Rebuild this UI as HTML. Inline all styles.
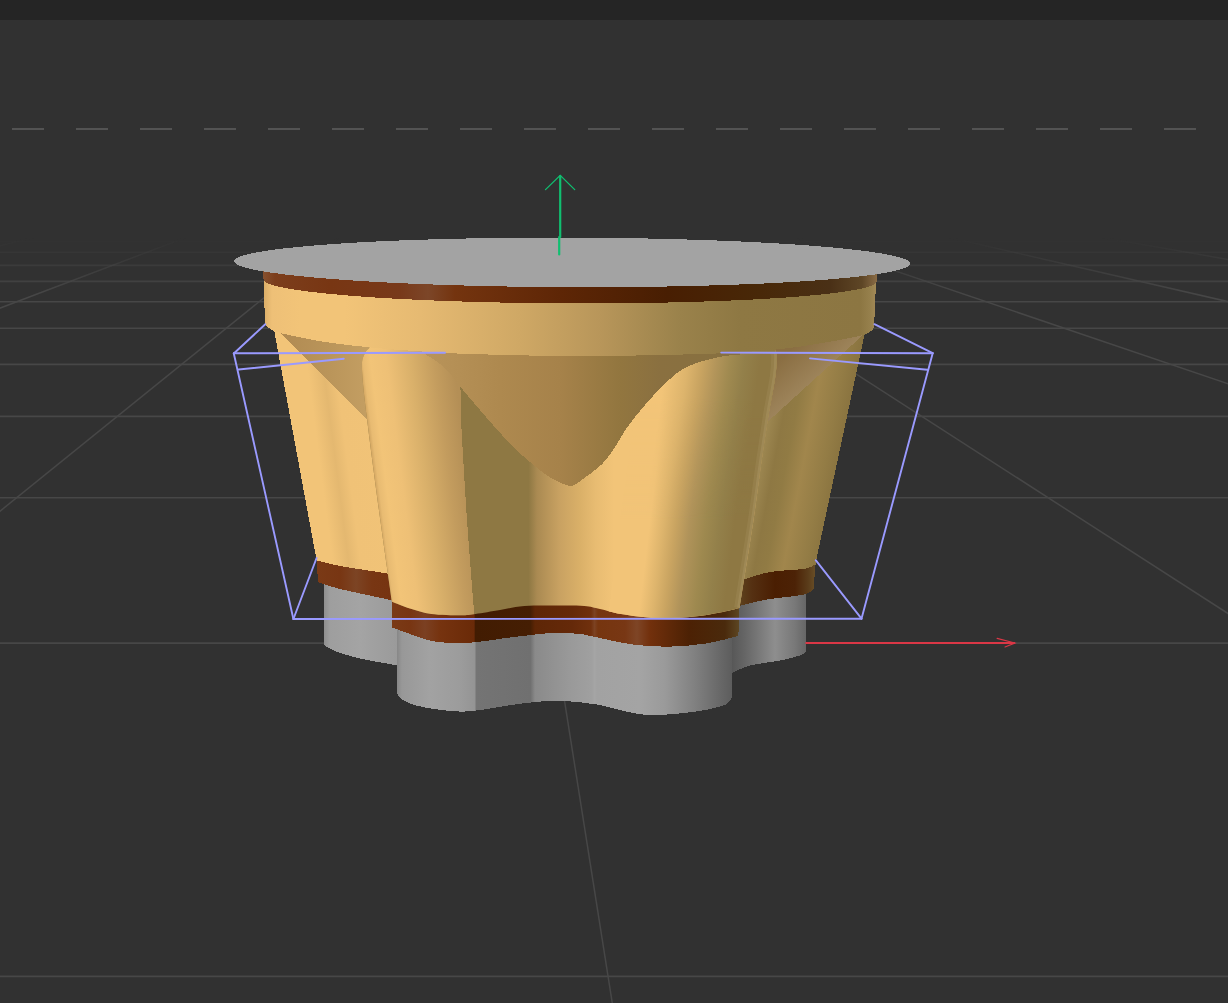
<!DOCTYPE html>
<html><head><meta charset="utf-8"><title>Viewport</title>
<style>
html,body{margin:0;padding:0;background:#313131;overflow:hidden;font-family:"Liberation Sans",sans-serif;}
svg{display:block;}
</style></head><body>
<svg width="1228" height="1003" viewBox="0 0 1228 1003">
<defs><linearGradient id="fadeg" gradientUnits="userSpaceOnUse" x1="0" y1="238" x2="0" y2="295"><stop offset="0" stop-color="#000"/><stop offset="1" stop-color="#fff"/></linearGradient>
<mask id="fadem" maskUnits="userSpaceOnUse" x="0" y="0" width="1228" height="1003"><rect x="0" y="0" width="1228" height="1003" fill="url(#fadeg)"/></mask>
<linearGradient id="gBL" gradientUnits="userSpaceOnUse" x1="323" y1="0" x2="398" y2="0"><stop offset="0.0000" stop-color="#8c8c8c"/><stop offset="0.0933" stop-color="#9e9e9e"/><stop offset="0.4933" stop-color="#a4a4a4"/><stop offset="1.0000" stop-color="#9a9a9a"/></linearGradient>
<linearGradient id="gBR" gradientUnits="userSpaceOnUse" x1="730" y1="0" x2="806" y2="0"><stop offset="0.0000" stop-color="#555"/><stop offset="0.1974" stop-color="#666"/><stop offset="0.5921" stop-color="#8e8e8e"/><stop offset="0.8553" stop-color="#787878"/><stop offset="1.0000" stop-color="#666"/></linearGradient>
<linearGradient id="bBL" gradientUnits="userSpaceOnUse" x1="316" y1="0" x2="392" y2="0"><stop offset="0.0000" stop-color="#7a3a16"/><stop offset="0.3158" stop-color="#783613"/><stop offset="0.5263" stop-color="#7c4424"/><stop offset="0.7368" stop-color="#783613"/><stop offset="1.0000" stop-color="#763411"/></linearGradient>
<linearGradient id="bBR" gradientUnits="userSpaceOnUse" x1="738" y1="0" x2="816" y2="0"><stop offset="0.0000" stop-color="#5e441f"/><stop offset="0.1795" stop-color="#553012"/><stop offset="0.4744" stop-color="#4a1e02"/><stop offset="0.7308" stop-color="#4c2206"/><stop offset="0.8974" stop-color="#5a3c1a"/><stop offset="1.0000" stop-color="#6a5028"/></linearGradient>
<linearGradient id="yBL" gradientTransform="translate(-62.4 0) skewX(7.40691)" gradientUnits="userSpaceOnUse" x1="240" y1="0" x2="420" y2="0"><stop offset="0.0000" stop-color="#dcae68"/><stop offset="0.1222" stop-color="#dcae68"/><stop offset="0.1667" stop-color="#F2C478"/><stop offset="0.4556" stop-color="#F2C478"/><stop offset="0.5444" stop-color="#e4b870"/><stop offset="0.6111" stop-color="#f0c277"/><stop offset="1.0000" stop-color="#F2C478"/></linearGradient>
<linearGradient id="rBL" gradientUnits="userSpaceOnUse" x1="280" y1="0" x2="370" y2="0"><stop offset="0.0000" stop-color="#b08a52"/><stop offset="0.5556" stop-color="#ba955a"/><stop offset="1.0000" stop-color="#c49f63"/></linearGradient>
<linearGradient id="yBR" gradientTransform="translate(91.2 0) skewX(-10.758)" gradientUnits="userSpaceOnUse" x1="730" y1="0" x2="900" y2="0"><stop offset="0.0000" stop-color="#9c8650"/><stop offset="0.1647" stop-color="#9c8650"/><stop offset="0.2412" stop-color="#8e7843"/><stop offset="0.3118" stop-color="#917b44"/><stop offset="0.4118" stop-color="#a1864c"/><stop offset="0.5412" stop-color="#937c45"/><stop offset="0.6176" stop-color="#8a7440"/><stop offset="1.0000" stop-color="#86703e"/></linearGradient>
<linearGradient id="rBR" gradientUnits="userSpaceOnUse" x1="790" y1="350" x2="830" y2="395"><stop offset="0" stop-color="#8a6e42"/><stop offset="1" stop-color="#a89068"/></linearGradient>
<linearGradient id="gF" gradientUnits="userSpaceOnUse" x1="396" y1="0" x2="733" y2="0"><stop offset="0.0000" stop-color="#848484"/><stop offset="0.0178" stop-color="#989898"/><stop offset="0.1009" stop-color="#a2a2a2"/><stop offset="0.1899" stop-color="#9c9c9c"/><stop offset="0.2344" stop-color="#949494"/><stop offset="0.2374" stop-color="#747474"/><stop offset="0.3991" stop-color="#707070"/><stop offset="0.4125" stop-color="#8a8a8a"/><stop offset="0.5223" stop-color="#9a9a9a"/><stop offset="0.5816" stop-color="#a0a0a0"/><stop offset="0.5890" stop-color="#a5a5a5"/><stop offset="0.5964" stop-color="#a2a2a2"/><stop offset="0.7240" stop-color="#a4a4a4"/><stop offset="0.7982" stop-color="#9a9a9a"/><stop offset="0.8872" stop-color="#808080"/><stop offset="0.9674" stop-color="#666"/><stop offset="1.0000" stop-color="#5c5c5c"/></linearGradient>
<linearGradient id="bF" gradientUnits="userSpaceOnUse" x1="391" y1="0" x2="740" y2="0"><stop offset="0.0000" stop-color="#7a3a16"/><stop offset="0.0544" stop-color="#783512"/><stop offset="0.0974" stop-color="#7b4022"/><stop offset="0.1404" stop-color="#76330f"/><stop offset="0.2378" stop-color="#6a2a08"/><stop offset="0.2421" stop-color="#421c02"/><stop offset="0.3997" stop-color="#451e03"/><stop offset="0.4126" stop-color="#5e2606"/><stop offset="0.5186" stop-color="#652909"/><stop offset="0.5731" stop-color="#70300d"/><stop offset="0.5831" stop-color="#7c4222"/><stop offset="0.5931" stop-color="#76350f"/><stop offset="0.6705" stop-color="#783714"/><stop offset="0.7049" stop-color="#7e4526"/><stop offset="0.7421" stop-color="#72300c"/><stop offset="0.8539" stop-color="#4c2104"/><stop offset="0.9570" stop-color="#4a2a0c"/><stop offset="1.0000" stop-color="#5e4824"/></linearGradient>
<clipPath id="cF"><path d="M369.3 348.1 C368.5 349.1 365.6 350.7 364.4 354.2 C363.2 357.7 361.6 358.3 362.0 368.9 C362.4 379.5 363.8 392.5 366.9 417.7 C369.9 442.9 376.1 489.3 380.3 520.0 C384.5 550.7 390.0 588.2 391.9 601.8 L391.9 601.8 C394.9 602.9 403.4 606.5 410.0 608.5 C416.6 610.5 423.0 612.9 431.5 614.0 C440.0 615.1 453.5 615.3 460.8 615.3 C468.1 615.3 469.0 614.9 475.5 614.0 C482.0 613.1 491.9 611.3 500.0 610.0 C508.1 608.7 514.3 606.8 524.3 606.0 C534.3 605.2 550.0 605.5 560.0 605.5 C570.0 605.5 577.7 605.4 584.4 606.0 C591.1 606.6 593.9 607.7 600.0 609.0 C606.1 610.3 611.4 612.5 621.0 614.0 C630.6 615.5 645.5 617.8 657.7 618.2 C669.9 618.6 684.0 617.5 694.4 616.5 C704.8 615.5 712.5 613.9 720.0 612.5 C727.5 611.1 736.3 608.8 739.6 608.0 L739.6 608.0 C741.9 593.3 750.0 543.6 753.5 520.0 C757.0 496.4 758.4 483.7 760.8 466.6 C763.2 449.6 765.7 432.8 768.1 417.7 C770.5 402.6 774.0 386.4 775.4 376.2 C776.8 366.0 776.7 360.6 776.7 356.6 C776.7 352.6 775.6 352.8 775.4 352.0 L775 340 L369 340 Z"/></clipPath>
<linearGradient id="yF" gradientUnits="userSpaceOnUse" x1="468" y1="0" x2="800" y2="0"><stop offset="0.0000" stop-color="#8e7843"/><stop offset="0.1822" stop-color="#8e7843"/><stop offset="0.2078" stop-color="#aa8a52"/><stop offset="0.2771" stop-color="#c9a262"/><stop offset="0.3373" stop-color="#dab068"/><stop offset="0.3855" stop-color="#e8bc72"/><stop offset="0.4398" stop-color="#F2C478"/><stop offset="1.0000" stop-color="#F2C478"/></linearGradient>
<linearGradient id="yFR" gradientTransform="translate(62.4 0) skewX(-6.84277)" gradientUnits="userSpaceOnUse" x1="560" y1="0" x2="820" y2="0"><stop offset="0.0000" stop-color="#F2C478" stop-opacity="0"/><stop offset="0.2304" stop-color="#F2C478" stop-opacity="0"/><stop offset="0.2308" stop-color="#F2C478" stop-opacity="1"/><stop offset="0.3462" stop-color="#F2C478"/><stop offset="0.4000" stop-color="#ddb46c"/><stop offset="0.4462" stop-color="#c9a461"/><stop offset="0.5000" stop-color="#b0935a"/><stop offset="0.5615" stop-color="#9e894f"/><stop offset="0.6154" stop-color="#93804a"/><stop offset="0.6731" stop-color="#8E7843"/><stop offset="1.0000" stop-color="#8E7843"/></linearGradient>
<linearGradient id="yFR2" gradientTransform="translate(72.8 0) skewX(-7.96961)" gradientUnits="userSpaceOnUse" x1="560" y1="0" x2="820" y2="0"><stop offset="0.0000" stop-color="#F2C478" stop-opacity="0"/><stop offset="0.2304" stop-color="#F2C478" stop-opacity="0"/><stop offset="0.2308" stop-color="#F2C478" stop-opacity="1"/><stop offset="0.3231" stop-color="#F2C478"/><stop offset="0.4077" stop-color="#ddb46c"/><stop offset="0.4615" stop-color="#c9a461"/><stop offset="0.5154" stop-color="#b3955a"/><stop offset="0.5692" stop-color="#a08a50"/><stop offset="0.6231" stop-color="#93804a"/><stop offset="0.6846" stop-color="#8E7843"/><stop offset="1.0000" stop-color="#8E7843"/></linearGradient>
<linearGradient id="fr2g" gradientUnits="userSpaceOnUse" x1="0" y1="395" x2="0" y2="520"><stop offset="0" stop-color="#fff"/><stop offset="1" stop-color="#000"/></linearGradient>
<mask id="fr2m" maskUnits="userSpaceOnUse" x="560" y="335" width="240" height="200"><rect x="560" y="335" width="240" height="200" fill="url(#fr2g)"/></mask>
<linearGradient id="yFL" gradientUnits="userSpaceOnUse" x1="372" y1="470" x2="466" y2="458"><stop offset="0" stop-color="#c89c5a"/><stop offset="0.05" stop-color="#e8bb72"/><stop offset="0.13" stop-color="#F2C478"/><stop offset="0.3" stop-color="#EEC076"/><stop offset="0.55" stop-color="#D9B06A"/><stop offset="0.8" stop-color="#C39C5E"/><stop offset="1" stop-color="#B48F56"/></linearGradient>
<linearGradient id="rC" gradientUnits="userSpaceOnUse" x1="425" y1="0" x2="725" y2="0"><stop offset="0.0000" stop-color="#b9945a"/><stop offset="0.2500" stop-color="#ae894f"/><stop offset="0.4500" stop-color="#a6824a"/><stop offset="0.6500" stop-color="#92763f"/><stop offset="0.7833" stop-color="#8a7040"/><stop offset="1.0000" stop-color="#877040"/></linearGradient>
<linearGradient id="yB" gradientUnits="userSpaceOnUse" x1="263" y1="0" x2="877" y2="0"><stop offset="0.0000" stop-color="#d9ac66"/><stop offset="0.0147" stop-color="#eec077"/><stop offset="0.0603" stop-color="#F2C478"/><stop offset="0.1336" stop-color="#F2C478"/><stop offset="0.2557" stop-color="#e6ba72"/><stop offset="0.4186" stop-color="#cfa865"/><stop offset="0.5489" stop-color="#b8965a"/><stop offset="0.6792" stop-color="#9a824b"/><stop offset="0.7769" stop-color="#8e7843"/><stop offset="0.9723" stop-color="#8c7642"/><stop offset="0.9886" stop-color="#96804c"/><stop offset="1.0000" stop-color="#a48a58"/></linearGradient>
<linearGradient id="bT" gradientUnits="userSpaceOnUse" x1="263" y1="0" x2="877" y2="0"><stop offset="0.0000" stop-color="#86502e"/><stop offset="0.0195" stop-color="#7c3e1c"/><stop offset="0.1091" stop-color="#783613"/><stop offset="0.2231" stop-color="#78391a"/><stop offset="0.2687" stop-color="#7c4628"/><stop offset="0.3127" stop-color="#74340f"/><stop offset="0.4837" stop-color="#5e2606"/><stop offset="0.6580" stop-color="#481e02"/><stop offset="0.8094" stop-color="#482808"/><stop offset="0.9235" stop-color="#4a3016"/><stop offset="0.9756" stop-color="#5e4626"/><stop offset="1.0000" stop-color="#8a6c46"/></linearGradient></defs>
<rect x="0" y="0" width="1228" height="1003" fill="#313131"/>
<rect x="0" y="0" width="1228" height="20" fill="#252525"/>
<line x1="12" y1="128.9" x2="1228" y2="128.9" stroke="#535353" stroke-width="2" stroke-dasharray="32 32"/>
<g><line x1="0" y1="976.4" x2="1228" y2="976.4" stroke="#474747" stroke-width="1.6" opacity="1.00"/><line x1="0" y1="643.1" x2="1228" y2="643.1" stroke="#474747" stroke-width="1.6" opacity="1.00"/><line x1="0" y1="497.8" x2="1228" y2="497.8" stroke="#474747" stroke-width="1.6" opacity="1.00"/><line x1="0" y1="416.4" x2="1228" y2="416.4" stroke="#474747" stroke-width="1.6" opacity="1.00"/><line x1="0" y1="364.4" x2="1228" y2="364.4" stroke="#474747" stroke-width="1.6" opacity="1.00"/><line x1="0" y1="328.3" x2="1228" y2="328.3" stroke="#474747" stroke-width="1.6" opacity="1.00"/><line x1="0" y1="301.8" x2="1228" y2="301.8" stroke="#474747" stroke-width="1.6" opacity="1.00"/><line x1="0" y1="281.4" x2="1228" y2="281.4" stroke="#474747" stroke-width="1.6" opacity="0.76"/><line x1="0" y1="265.4" x2="1228" y2="265.4" stroke="#474747" stroke-width="1.6" opacity="0.48"/><line x1="0" y1="252.3" x2="1228" y2="252.3" stroke="#474747" stroke-width="1.6" opacity="0.25"/><line x1="0" y1="241.6" x2="1228" y2="241.6" stroke="#474747" stroke-width="1.6" opacity="0.06"/></g>
<g mask="url(#fadem)"><line x1="-626.2" y1="228" x2="-10219.9" y2="1100" stroke="#474747" stroke-width="1.5"/><line x1="-486.7" y1="228" x2="-8864.0" y2="1100" stroke="#474747" stroke-width="1.5"/><line x1="-347.2" y1="228" x2="-7508.1" y2="1100" stroke="#474747" stroke-width="1.5"/><line x1="-207.7" y1="228" x2="-6152.1" y2="1100" stroke="#474747" stroke-width="1.5"/><line x1="-68.2" y1="228" x2="-4796.2" y2="1100" stroke="#474747" stroke-width="1.5"/><line x1="71.3" y1="228" x2="-3440.2" y2="1100" stroke="#474747" stroke-width="1.5"/><line x1="210.8" y1="228" x2="-2084.3" y2="1100" stroke="#474747" stroke-width="1.5"/><line x1="350.3" y1="228" x2="-728.4" y2="1100" stroke="#474747" stroke-width="1.5"/><line x1="489.8" y1="228" x2="627.6" y2="1100" stroke="#474747" stroke-width="1.5"/><line x1="629.3" y1="228" x2="1983.5" y2="1100" stroke="#474747" stroke-width="1.5"/><line x1="768.8" y1="228" x2="3339.5" y2="1100" stroke="#474747" stroke-width="1.5"/><line x1="908.3" y1="228" x2="4695.4" y2="1100" stroke="#474747" stroke-width="1.5"/><line x1="1047.8" y1="228" x2="6051.3" y2="1100" stroke="#474747" stroke-width="1.5"/><line x1="1187.3" y1="228" x2="7407.3" y2="1100" stroke="#474747" stroke-width="1.5"/><line x1="1326.8" y1="228" x2="8763.2" y2="1100" stroke="#474747" stroke-width="1.5"/><line x1="1466.3" y1="228" x2="10119.2" y2="1100" stroke="#474747" stroke-width="1.5"/><line x1="1605.8" y1="228" x2="11475.1" y2="1100" stroke="#474747" stroke-width="1.5"/></g>
<g shape-rendering="crispEdges"><path d="M323.5 580 L323.5 644.6 L323.5 644.6 C325.4 645.7 328.9 648.7 335.0 651.0 C341.1 653.3 349.6 656.1 360.0 658.5 C370.4 660.9 391.1 664.2 397.3 665.4 L400 665 L400 590 Z" fill="url(#gBL)"/><path d="M805.5 590 L805.5 652 L805.5 652.0 C804.5 652.6 803.7 654.2 799.4 655.6 C795.1 657.0 788.0 658.9 779.9 660.5 C771.8 662.1 758.5 663.4 750.6 665.4 C742.7 667.4 735.3 671.5 732.2 672.7 L728 674 L728 600 Z" fill="url(#gBR)"/><path d="M316.6 555 L317.9 582.3 L317.9 582.3 C321.6 583.4 332.1 587.0 340.0 589.0 C347.9 591.0 356.5 592.6 365.0 594.5 C373.5 596.4 386.8 599.2 391.2 600.1 L395 600 L395 560 Z" fill="url(#bBL)"/><path d="M815.3 555 L814.1 588.4 L814.1 588.4 C812.5 589.4 812.0 592.7 804.3 594.5 C796.6 596.3 778.3 597.6 767.7 599.4 C757.1 601.2 745.3 604.5 740.8 605.5 L736 606 L736 560 Z" fill="url(#bBR)"/><path d="M273.7 328 L316.6 560.3 L316.6 560.3 C320.5 561.2 331.9 564.4 340.0 566.0 C348.1 567.6 356.9 568.7 365.0 570.0 C373.1 571.3 384.8 573.1 388.7 573.7 L400 574 L400 328 Z" fill="url(#yBL)"/><path d="M278.0 330.0 L372.0 345.0 L370.0 420.0 L366.9 419.0 Z" fill="url(#rBL)"/><path d="M865.5 330 L816.2 560.3 L815.8 564.5 L815.3 564.5 C813.5 565.2 811.8 567.6 804.3 568.9 C796.8 570.1 780.3 570.2 770.1 572.0 C759.9 573.8 747.7 578.6 743.2 579.9 L736 582 L736 330 Z" fill="url(#yBR)"/><path d="M770.0 340.0 L866.0 328.0 L863.4 334.7 L768.1 421.4 Z" fill="url(#rBR)"/><path d="M396.8 625 L396.8 690 L396.8 690.0 C397.3 691.3 396.7 695.4 400.0 698.0 C403.3 700.6 408.3 703.5 416.8 705.7 C425.3 707.9 441.2 710.2 451.0 711.0 C460.8 711.8 463.3 711.9 475.5 710.6 C487.7 709.3 510.2 704.8 524.3 703.2 C538.4 701.6 548.0 700.6 560.0 700.8 C572.0 701.0 584.4 702.5 596.6 704.5 C608.8 706.5 623.1 711.2 633.3 713.0 C643.5 714.8 647.5 715.2 657.7 715.0 C667.9 714.8 684.2 713.1 694.4 711.8 C704.6 710.4 713.2 708.4 718.8 706.9 C724.4 705.4 725.8 704.6 728.0 703.0 C730.2 701.4 731.5 698.0 732.2 697.0 L732.2 625 Z" fill="url(#gF)"/><path d="M391.9 595 L392.4 627.5 L392.4 627.5 C395.3 628.6 403.5 631.8 410.0 634.0 C416.5 636.2 424.0 639.5 431.5 641.0 C439.0 642.5 447.7 642.8 455.0 643.0 C462.3 643.2 466.3 643.1 475.5 642.2 C484.7 641.3 498.6 638.9 510.0 637.5 C521.4 636.1 535.6 634.4 543.9 633.6 C552.2 632.8 554.0 632.8 560.0 632.9 C566.0 633.0 573.9 633.3 580.0 634.0 C586.1 634.7 587.7 635.5 596.6 637.3 C605.5 639.1 621.1 643.0 633.3 644.6 C645.5 646.2 657.8 646.8 670.0 646.6 C682.2 646.4 695.2 645.2 706.6 643.4 C718.0 641.6 733.1 637.2 738.4 636.0 L739.6 595 Z" fill="url(#bF)"/><g clip-path="url(#cF)"><rect x="355" y="335" width="430" height="290" fill="url(#yF)"/><rect x="355" y="335" width="430" height="290" fill="url(#yFR)"/><g mask="url(#fr2m)"><rect x="560" y="335" width="240" height="200" fill="url(#yFR2)"/></g><path d="M739.6 608.0 C741.9 593.3 750.0 543.6 753.5 520.0 C757.0 496.4 758.4 483.7 760.8 466.6 C763.2 449.6 765.7 432.8 768.1 417.7 C770.5 402.6 774.0 386.4 775.4 376.2 C776.8 366.0 776.7 360.6 776.7 356.6 C776.7 352.6 775.6 352.8 775.4 352.0" fill="none" stroke="#b09a6a" stroke-width="11" opacity="0.22" shape-rendering="geometricPrecision"/><path d="M739.6 608.0 C741.9 593.3 750.0 543.6 753.5 520.0 C757.0 496.4 758.4 483.7 760.8 466.6 C763.2 449.6 765.7 432.8 768.1 417.7 C770.5 402.6 774.0 386.4 775.4 376.2 C776.8 366.0 776.7 360.6 776.7 356.6 C776.7 352.6 775.6 352.8 775.4 352.0" fill="none" stroke="#b09a6a" stroke-width="5" opacity="0.38" shape-rendering="geometricPrecision"/><path d="M355 335 L430 335 L425.5 354.2 C428.8 356.2 439.3 360.7 445.0 366.0 C450.7 371.3 457.1 377.4 459.7 386.0 C462.3 394.6 459.7 395.4 460.9 417.7 C462.1 440.0 464.8 487.3 467.0 520.0 C469.2 552.7 472.9 596.5 474.2 614.0 C475.5 631.5 474.9 623.2 475.0 625.0 L355 625 Z" fill="url(#yFL)"/></g><path d="M420 345 L425.5 354.2 C428.8 356.5 439.3 362.7 445.0 368.0 C450.7 373.3 452.8 377.7 459.7 386.0 C466.6 394.3 478.1 407.9 486.6 417.7 C495.2 427.5 502.9 436.5 511.0 444.6 C519.1 452.8 528.5 460.9 535.4 466.6 C542.3 472.3 547.4 475.7 552.5 478.8 C557.6 481.9 562.7 483.8 566.0 485.0 C569.3 486.2 571.1 485.9 572.1 486.1 L572.1 486.1 C573.4 485.3 575.0 484.9 580.0 481.2 C585.0 477.5 596.2 469.8 602.0 464.1 C607.8 458.4 610.5 453.5 615.0 447.0 C619.5 440.5 622.5 433.6 628.9 425.0 C635.3 416.4 645.2 404.4 653.3 395.7 C661.4 386.9 670.4 378.0 677.7 372.5 C685.0 367.0 690.0 365.4 697.3 362.8 C704.6 360.2 714.6 358.0 721.7 356.6 C728.8 355.2 737.0 354.9 740.0 354.5 L740 345 Z" fill="url(#rC)"/><path d="M263.2 270 L265 322.4 L265.0 322.4 C265.2 323.0 265.6 324.9 266.5 326.0 C267.4 327.1 268.3 327.9 270.4 329.0 C272.5 330.1 274.0 331.2 278.9 332.6 C283.8 334.0 293.6 336.0 300.0 337.3 C306.4 338.6 310.5 339.6 317.2 340.7 C323.9 341.8 331.5 342.9 340.0 344.0 C348.5 345.1 358.9 346.3 368.1 347.2 C377.3 348.1 386.5 348.9 395.0 349.6 C403.5 350.3 410.7 350.7 419.0 351.3 C427.3 351.9 436.5 352.6 445.0 353.0 C453.5 353.4 460.8 353.7 470.0 354.0 C479.2 354.3 488.3 354.5 500.0 354.8 C511.7 355.1 528.2 355.5 540.0 355.8 C551.8 356.1 561.0 356.3 571.0 356.4 C581.0 356.5 588.5 356.6 600.0 356.4 C611.5 356.2 626.7 355.7 640.0 355.4 C653.3 355.1 666.4 355.0 680.0 354.6 C693.6 354.2 710.1 353.8 721.4 353.3 C732.7 352.8 739.5 352.4 748.0 351.8 C756.5 351.2 763.6 350.8 772.3 349.9 C781.0 349.0 791.5 347.8 800.0 346.6 C808.5 345.4 814.9 344.2 823.2 342.8 C831.5 341.4 843.2 339.4 850.0 338.0 C856.8 336.6 860.6 335.6 863.9 334.6 C867.2 333.6 868.4 332.8 870.0 331.8 C871.6 330.8 872.6 330.1 873.3 328.5 C874.0 326.9 874.1 323.1 874.3 322.0 L876.5 272 Z" fill="url(#yB)"/><path d="M263.2 262 L263.5 279.4 A306.5 22.9 0.2 0 0 876.5 281.6 L876.5 262 Z" fill="url(#bT)"/><ellipse cx="572.2" cy="262.4" rx="338" ry="24.8" fill="#a3a3a3" transform="rotate(0.2 572.2 262.4)"/></g>
<g stroke-linecap="round"><line x1="233.8" y1="353.3" x2="445.0" y2="352.7" stroke="#9a9aff" stroke-width="1.9"/><line x1="721.2" y1="352.6" x2="932.7" y2="353.2" stroke="#9a9aff" stroke-width="1.9"/><line x1="233.8" y1="353.5" x2="265.3" y2="324.2" stroke="#9a9aff" stroke-width="1.9"/><line x1="932.7" y1="353.2" x2="874.4" y2="324.2" stroke="#9a9aff" stroke-width="1.9"/><line x1="233.8" y1="353.5" x2="293.4" y2="619.0" stroke="#9a9aff" stroke-width="1.9"/><line x1="932.7" y1="353.2" x2="861.5" y2="618.7" stroke="#9a9aff" stroke-width="1.9"/><line x1="293.4" y1="619.0" x2="861.5" y2="618.7" stroke="#9a9aff" stroke-width="1.9"/><line x1="293.4" y1="619.0" x2="316.6" y2="558.0" stroke="#9a9aff" stroke-width="1.9"/><line x1="861.5" y1="618.7" x2="815.7" y2="560.2" stroke="#9a9aff" stroke-width="1.9"/><line x1="238.7" y1="369.5" x2="343.8" y2="358.8" stroke="#9a9aff" stroke-width="1.9"/><line x1="927.3" y1="369.8" x2="810.0" y2="358.4" stroke="#9a9aff" stroke-width="1.9"/></g>
<g stroke="#10bf70" stroke-width="2.2" fill="none" stroke-linecap="round"><path d="M560.2 176 L560.2 237"/><path d="M559.2 237 L559.2 254.5"/><path d="M545.5 189.6 L560.2 175.4 L574.7 189.6" stroke-width="1.3"/></g>
<g stroke="#db3746" stroke-width="1.7" fill="none" stroke-linecap="round"><path d="M805.5 643.1 L1015 643.1" stroke-width="2" stroke-linecap="butt"/><path d="M997.1 638.4 L1015 643 L1005 647" stroke-width="1.1"/></g>
</svg>
</body></html>
